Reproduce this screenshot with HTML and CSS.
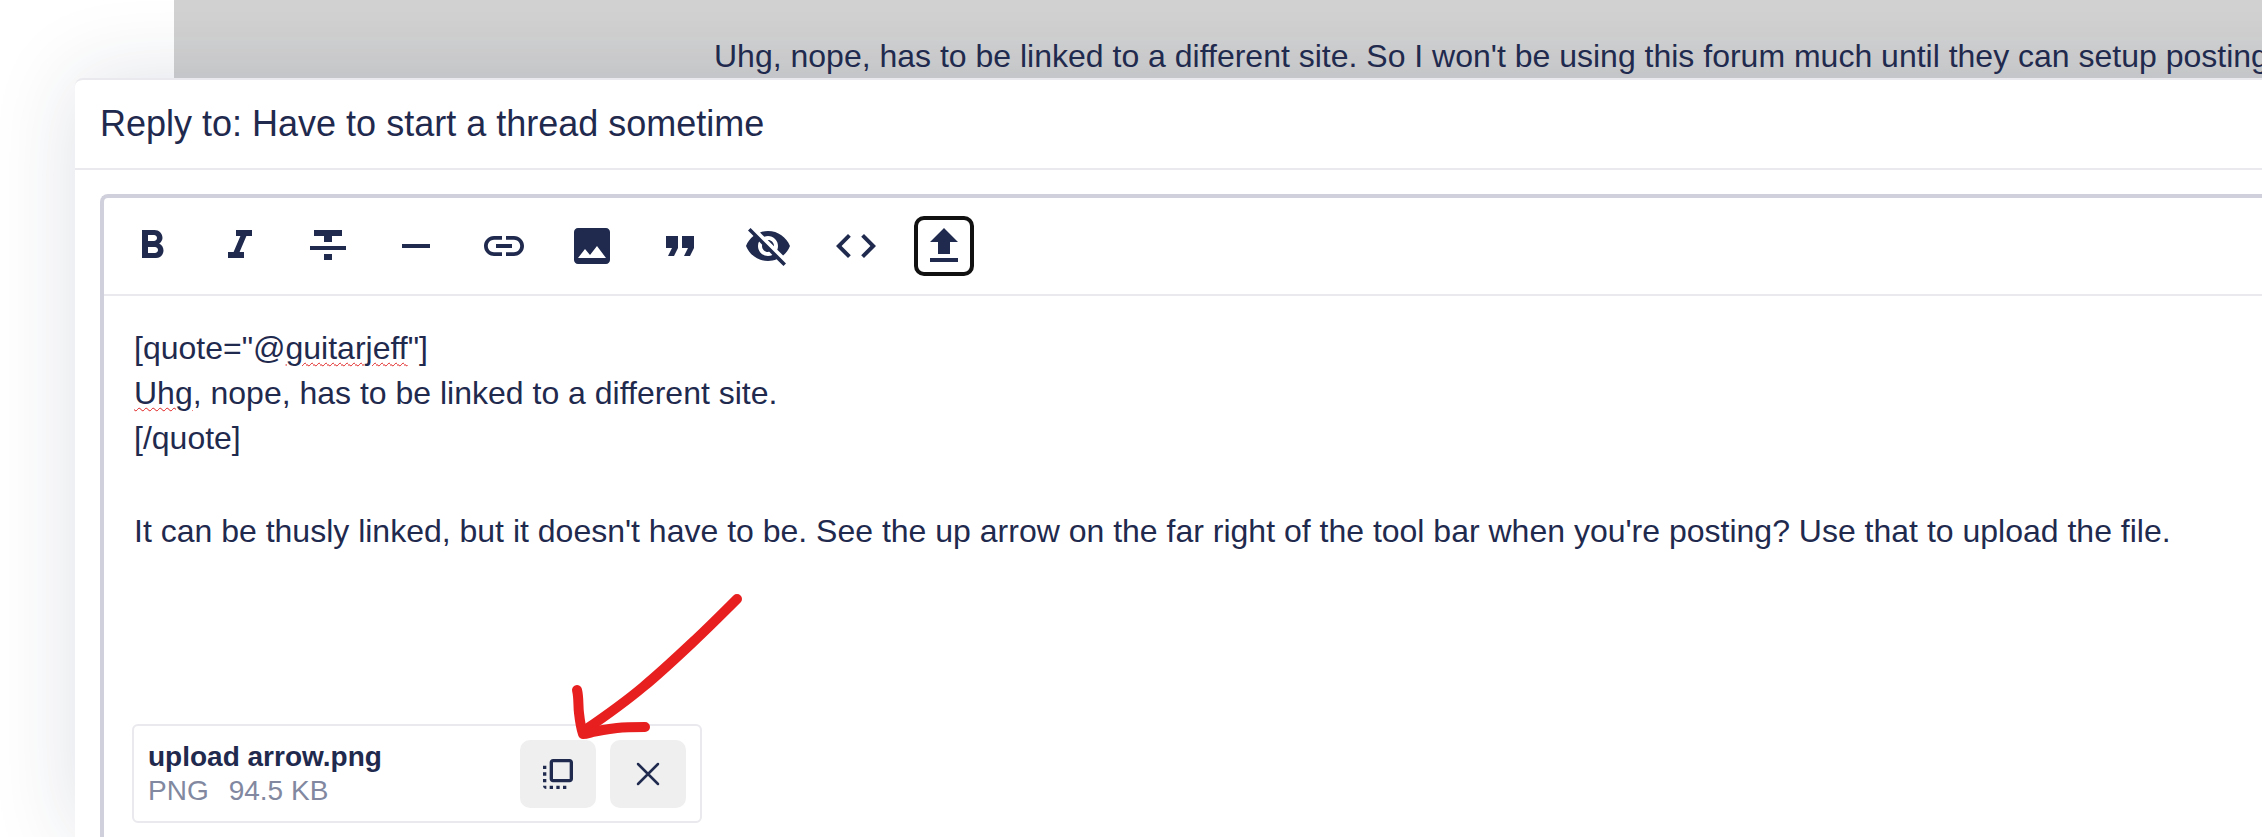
FILE: index.html
```html
<!DOCTYPE html>
<html lang="en">
<head>
  <meta charset="UTF-8">
  <title>Reply to: Have to start a thread sometime</title>
  <link rel="stylesheet" href="styles.css">
</head>
<body>
  <div class="post">
    <p>Uhg, nope, has to be linked to a different site. So I won't be using this forum much until they can setup posting</p>
  </div>

  <div class="modal">
    <div class="modal-header">Reply to: Have to start a thread sometime</div>

    <div class="editor">
      <div class="toolbar">
        <button type="button" class="tool"><svg viewBox="0 0 24 24"><path d="M15.6 10.79c.97-.67 1.65-1.77 1.65-2.79 0-2.26-1.75-4-4-4H7v14h7.04c2.09 0 3.71-1.7 3.71-3.79 0-1.52-.86-2.82-2.15-3.42zM10 6.5h3c.83 0 1.5.67 1.5 1.5s-.67 1.5-1.5 1.5h-3v-3zm3.5 9H10v-3h3.5c.83 0 1.5.67 1.5 1.5s-.67 1.5-1.5 1.5z"/></svg></button>
        <button type="button" class="tool"><svg viewBox="0 0 24 24"><path d="M10 4v3h2.21l-3.42 8H6v3h8v-3h-2.21l3.42-8H18V4z"/></svg></button>
        <button type="button" class="tool"><svg viewBox="0 0 24 24"><path d="M10 19h4v-3h-4v3zM5 4v3h5v3h4V7h5V4H5zM3 14h18v-2H3v2z"/></svg></button>
        <button type="button" class="tool"><svg viewBox="0 0 24 24"><path d="M19 13H5v-2h14v2z"/></svg></button>
        <button type="button" class="tool"><svg viewBox="0 0 24 24"><path d="M3.9 12c0-1.71 1.39-3.1 3.1-3.1h4V7H7c-2.76 0-5 2.24-5 5s2.24 5 5 5h4v-1.9H7c-1.71 0-3.1-1.39-3.1-3.1zM8 13h8v-2H8v2zm9-6h-4v1.9h4c1.71 0 3.1 1.39 3.1 3.1s-1.39 3.1-3.1 3.1h-4V17h4c2.76 0 5-2.24 5-5s-2.24-5-5-5z"/></svg></button>
        <button type="button" class="tool"><svg viewBox="0 0 24 24"><path d="M21 19V5c0-1.1-.9-2-2-2H5c-1.1 0-2 .9-2 2v14c0 1.1.9 2 2 2h14c1.1 0 2-.9 2-2zM8.5 13.5l2.5 3.01L14.5 12l4.5 6H5l3.5-4.5z"/></svg></button>
        <button type="button" class="tool"><svg viewBox="0 0 24 24"><path d="M6 17h3l2-4V7H5v6h3zm8 0h3l2-4V7h-6v6h3z"/></svg></button>
        <button type="button" class="tool"><svg viewBox="0 0 24 24"><path d="M12 7c2.76 0 5 2.24 5 5 0 .65-.13 1.26-.36 1.83l2.92 2.92c1.51-1.26 2.7-2.89 3.43-4.75-1.73-4.39-6-7.5-11-7.5-1.4 0-2.74.25-3.98.7l2.16 2.16C10.74 7.13 11.35 7 12 7zM2 4.27l2.28 2.28.46.46C3.08 8.3 1.78 10.02 1 12c1.73 4.39 6 7.5 11 7.5 1.55 0 3.03-.3 4.38-.84l.42.42L19.73 22 21 20.73 3.27 3 2 4.27zM7.53 9.8l1.55 1.55c-.05.21-.08.43-.08.65 0 1.66 1.34 3 3 3 .22 0 .44-.03.65-.08l1.55 1.55c-.67.33-1.41.53-2.2.53-2.76 0-5-2.24-5-5 0-.79.2-1.53.53-2.2zm4.31-.78l3.15 3.15.02-.16c0-1.66-1.34-3-3-3l-.17.01z"/></svg></button>
        <button type="button" class="tool"><svg viewBox="0 0 24 24"><path d="M9.4 16.6L4.8 12l4.6-4.6L8 6l-6 6 6 6 1.4-1.4zm5.2 0l4.6-4.6-4.6-4.6L16 6l6 6-6 6-1.4-1.4z"/></svg></button>
        <button type="button" class="tool tool-active"><svg viewBox="0 0 24 24"><path d="M5 20h14v-2H5v2zm0-10h4v6h6v-6h4l-7-7-7 7z"/></svg></button>
      </div>

      <div class="content">
        <div>[quote="@<span class="misspelt">guitarjeff</span>"]</div>
        <div><span class="misspelt">Uhg</span>, nope, has to be linked to a different site.</div>
        <div>[/quote]</div>
        <div class="blank-line">&nbsp;</div>
        <div>It can be thusly linked, but it doesn't have to be. See the up arrow on the far right of the tool bar when you're posting? Use that to upload the file.</div>
      </div>

      <div class="attachment">
        <div class="file-info">
          <div class="file-name">upload arrow.png</div>
          <div class="file-meta"><span>PNG</span><span>94.5 KB</span></div>
        </div>
        <button type="button" class="file-btn"><svg viewBox="0 0 24 24"><path d="M3 13h2v-2H3v2zm0 4h2v-2H3v2zm2 4v-2H3c0 1.1.89 2 2 2zM3 9h2V7H3v2zm12 12h2v-2h-2v2zm4-18H9c-1.11 0-2 .9-2 2v10c0 1.1.89 2 2 2h10c1.1 0 2-.9 2-2V5c0-1.1-.9-2-2-2zm0 12H9V5h10v10zm-8 6h2v-2h-2v2zm-4 0h2v-2H7v2z"/></svg></button>
        <button type="button" class="file-btn"><svg class="icon-line" viewBox="0 0 24 24"><path d="M18 6L6 18M6 6l12 12"/></svg></button>
      </div>
    </div>
  </div>

  <!-- hand drawn arrow on top of the screenshot -->
  <svg class="scribble" viewBox="570 590 180 160">
    <path d="M737 599C722 614 708 628 693 642C676 658 660 673 643 687C624 703 604 717 585 730"/>
    <path d="M577 690C579 698 578 706 579 713C580 722 581 728 583 734C586 734 589 733 593 732C601 730 609 729 617 728C626 727 636 727 645 727"/>
  </svg>
</body>
</html>
```

FILE: styles.css
```css
/* General Styles */
html, body {
  height: 837px;
}

body {
  position: relative;
  margin: 0;
  overflow: hidden;
  background: #fff;
  color: #1f2a4e;
  font-family: "Liberation Sans", Arial, sans-serif;
  font-size: 32px;
  line-height: 45px;
}

button {
  display: flex;
  align-items: center;
  justify-content: center;
  padding: 0;
  border: none;
  background: none;
  color: inherit;
}

svg {
  fill: currentColor;
}

/* Post behind the modal */
.post {
  height: 78px;
  margin-left: 174px;
  padding-left: 540px;
  box-sizing: border-box;
  background: #d2d2d2;
  white-space: nowrap;
  overflow: hidden;
}

.post p {
  margin: 0;
  padding-top: 34px;
}

/* Modal */
.modal {
  width: 2400px;
  height: 759px;
  margin-left: 75px;
  box-sizing: border-box;
  overflow: hidden;
  background: #fff;
  border-top: 2px solid #e9e9ee;
  border-radius: 8px 8px 0 0;
  box-shadow: 0 0 85px rgba(31, 42, 78, 0.14);
}

.modal-header {
  height: 88px;
  padding-left: 25px;
  border-bottom: 2px solid #e9e9ee;
  font-size: 36px;
  line-height: 88px;
}

.editor {
  height: 700px;
  margin: 24px 0 0 25px;
  border-top: 4px solid #d0d0dc;
  border-left: 4px solid #d0d0dc;
  border-top-left-radius: 8px;
}

.toolbar {
  display: flex;
  gap: 28px;
  padding: 18px 18px;
  border-bottom: 2px solid #e9e9ee;
}

.tool {
  width: 60px;
  height: 60px;
  box-sizing: border-box;
  border-radius: 10px;
}

.tool svg {
  width: 48px;
  height: 48px;
  flex: none;
}

.tool-active {
  border: 4px solid #111;
}

.content {
  height: 225px;
  padding: 30px 0 0 30px;
  white-space: nowrap;
}

.blank-line {
  height: 48px;
}

.misspelt {
  text-decoration: underline wavy #e02020 1.25px;
  text-underline-offset: 3px;
}

/* Attached file */
.attachment {
  display: flex;
  align-items: center;
  gap: 14px;
  width: 570px;
  height: 99px;
  margin: 173px 0 0 28px;
  padding: 0 14px;
  box-sizing: border-box;
  border: 2px solid #e9e9ee;
  border-radius: 6px;
}

.file-info {
  flex: 1;
}

.file-name {
  font-size: 28px;
  font-weight: 700;
  line-height: 34px;
}

.file-meta {
  display: flex;
  gap: 20px;
  color: #8188a0;
  font-size: 28px;
  line-height: 34px;
}

.file-btn {
  width: 76px;
  height: 68px;
  border-radius: 10px;
  background: #efefef;
}

.file-btn svg {
  width: 40px;
  height: 40px;
}

.file-btn .icon-line {
  fill: none;
  stroke: currentColor;
  stroke-width: 1.5;
  stroke-linecap: round;
}

/* Red arrow */
.scribble {
  position: absolute;
  left: 570px;
  top: 590px;
  width: 180px;
  height: 160px;
  fill: none;
  stroke: #e81f1f;
  stroke-width: 10;
  stroke-linecap: round;
  stroke-linejoin: round;
}
```
